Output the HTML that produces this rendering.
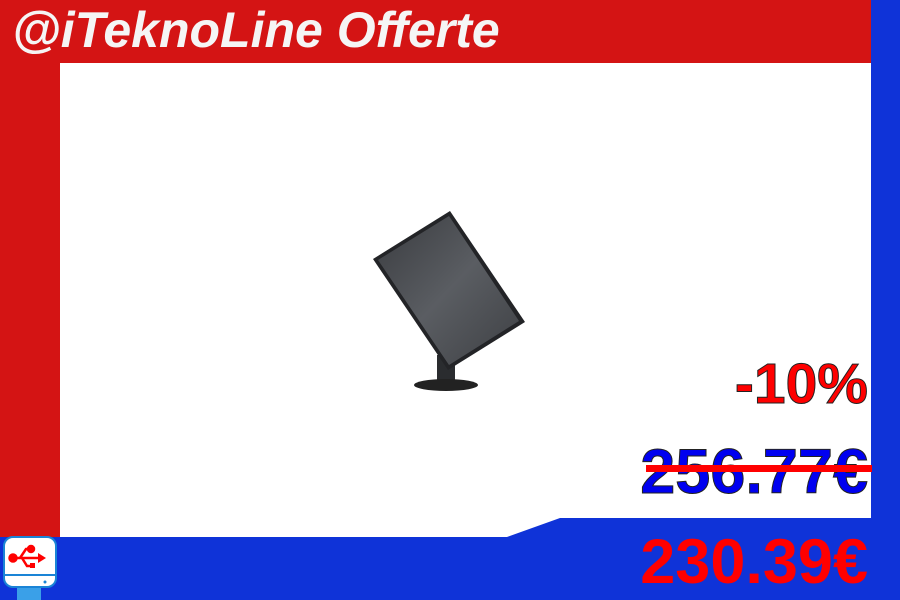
<!DOCTYPE html>
<html><head><meta charset="utf-8"><style>
*{margin:0;padding:0}
body{width:900px;height:600px;overflow:hidden;position:relative;background:#fff;font-family:"Liberation Sans",sans-serif}
.abs{position:absolute}
.t{font-weight:bold;white-space:nowrap;line-height:1;-webkit-text-stroke:1px #222}
</style></head><body>
<div class="abs" style="left:0;top:0;width:871px;height:63px;background:#d41414"></div>
<div class="abs" style="left:0;top:0;width:60px;height:540px;background:#d41414"></div>
<div class="abs" style="left:871px;top:0;width:29px;height:600px;background:#0f33d8"></div>
<svg class="abs" style="left:0;top:0" width="900" height="600">
<defs><linearGradient id="g" x1="0" y1="0" x2="1" y2="1"><stop offset="0" stop-color="#3a3c40"/><stop offset="0.5" stop-color="#5a5d62"/><stop offset="1" stop-color="#3e4044"/></linearGradient></defs>
<rect x="437" y="355" width="18" height="27" fill="#2a2c2f"/>
<ellipse cx="446" cy="385" rx="32" ry="6" fill="#222"/>
<polygon points="373,259 450,211 525,322 448,370" fill="#232427"/>
<polygon points="378,260 449,216 519,321 449,365" fill="url(#g)"/>
<polygon points="0,537 507,537 560,518 900,518 900,600 0,600" fill="#0f33d8"/>
<rect x="4" y="537" width="52" height="50" rx="9" fill="#fff" stroke="#1a84d6" stroke-width="2"/>
<line x1="4" y1="575" x2="56" y2="575" stroke="#1a84d6" stroke-width="2"/>
<circle cx="45" cy="582" r="1.5" fill="#1a84d6"/>
<rect x="17" y="588" width="24" height="12" fill="#3aa0e8"/>
<g fill="#f00" stroke="#f00" stroke-width="2.5">
<circle cx="13" cy="558" r="3.5"/><line x1="13" y1="558" x2="40" y2="558"/>
<polygon points="38,553 46,558 38,563" stroke="none"/>
<polyline points="20,558 26,549 30,549" fill="none"/><circle cx="31" cy="549" r="3"/>
<polyline points="22,558 27,566 32,566" fill="none"/><rect x="30" y="563" width="5" height="5" stroke="none"/>
</g>
</svg>
<div class="abs" style="left:12px;top:3px;font-size:50px;font-weight:bold;font-style:italic;color:#f5f5f5;white-space:nowrap;line-height:1.1">@iTeknoLine Offerte</div>
<div class="abs t" style="right:32px;top:356px;font-size:57px;color:#f00">-10%</div>
<div class="abs t" style="right:32px;top:441px;font-size:63px;color:#0000f0">256.77€</div>
<div class="abs" style="left:646px;top:465px;width:226px;height:7px;background:#f00"></div>
<div class="abs t" style="right:32px;top:531px;font-size:63px;color:#f00;-webkit-text-stroke:0">230.39€</div>
</body></html>
